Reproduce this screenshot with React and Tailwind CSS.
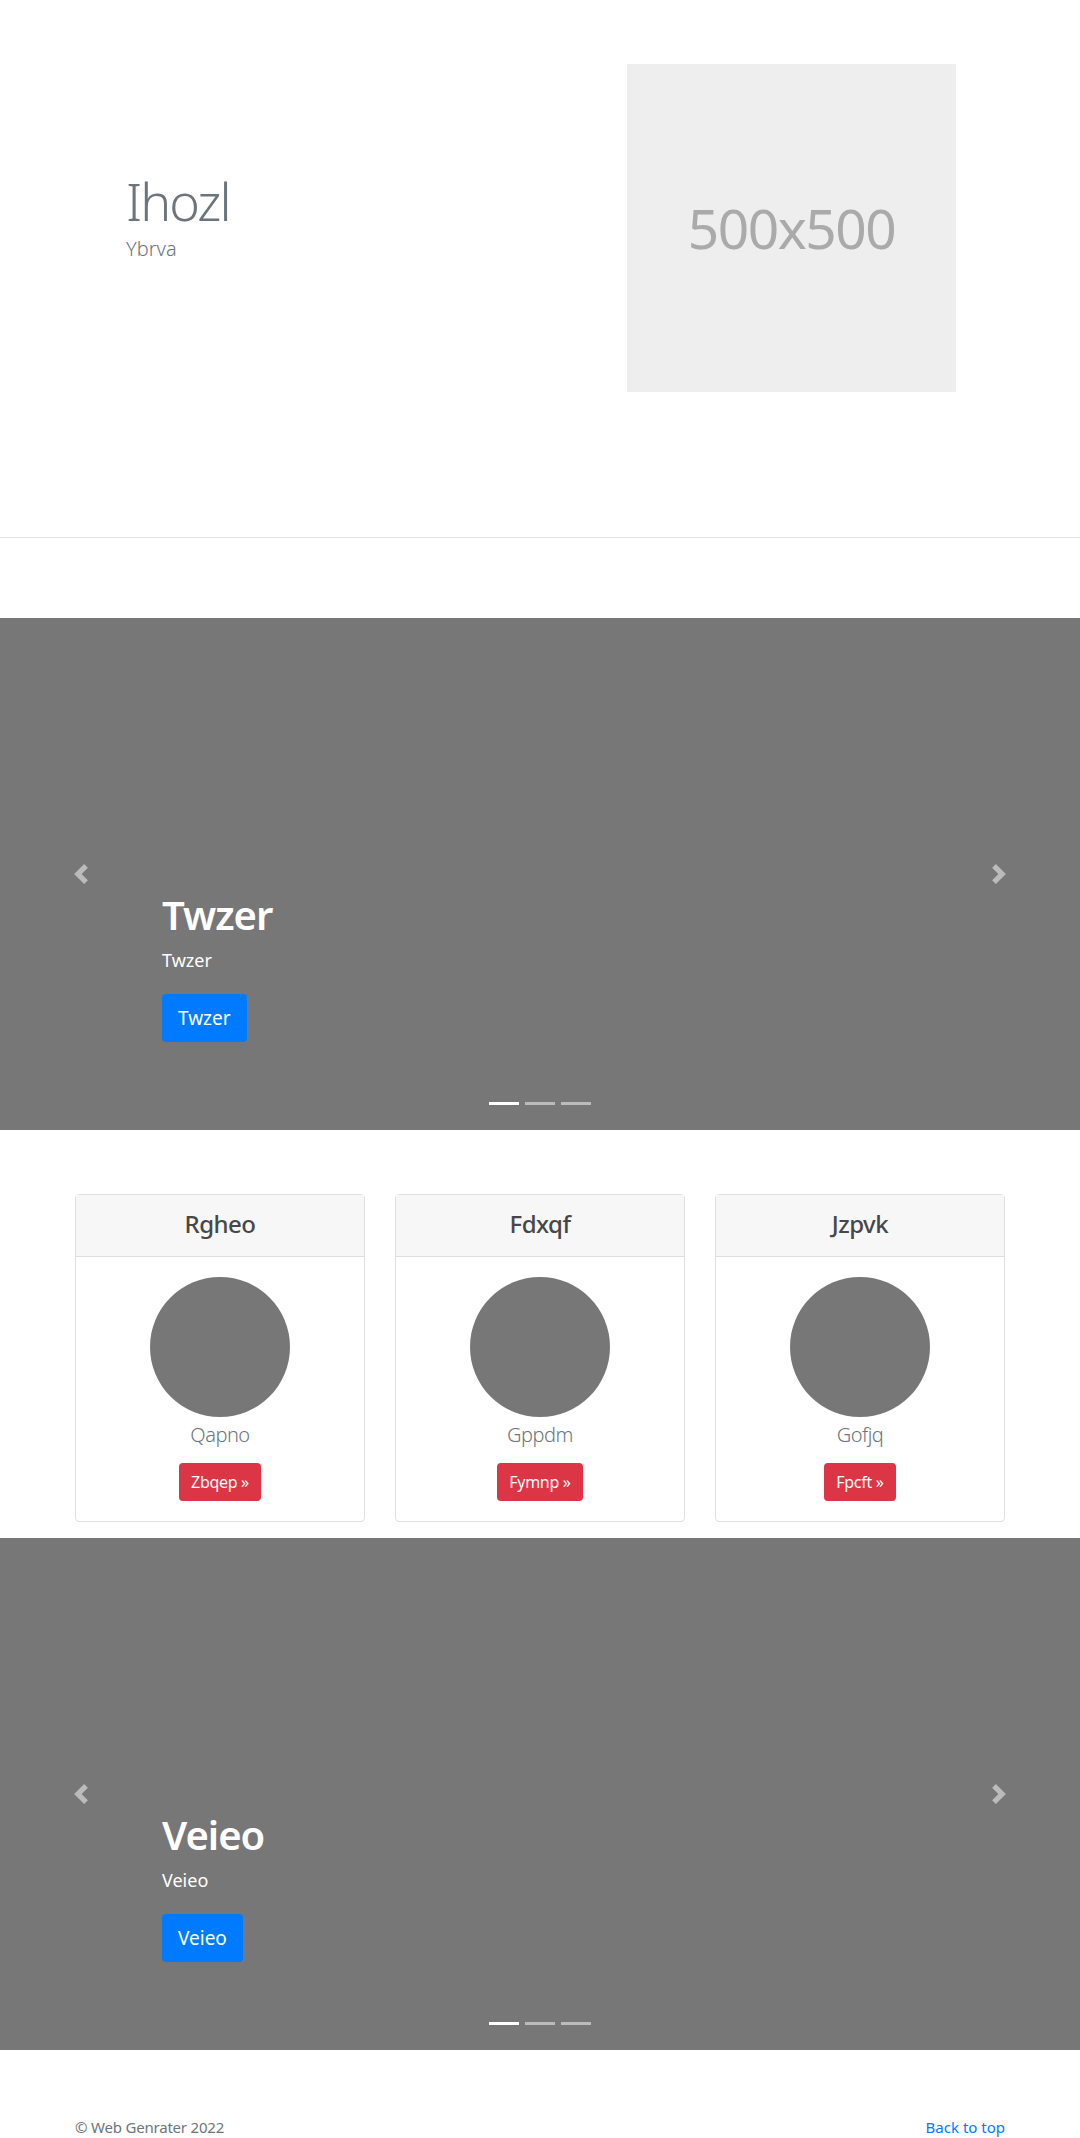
import React from 'react';

const PrevIcon = () => (
  <svg width="20" height="20" viewBox="0 0 8 8" fill="#fff" className="opacity-50">
    <path d="M5.25 0l-4 4 4 4 1.5-1.5L4.25 4l2.5-2.5L5.25 0z" />
  </svg>
);

const NextIcon = () => (
  <svg width="20" height="20" viewBox="0 0 8 8" fill="#fff" className="opacity-50">
    <path d="M2.75 0l-1.5 1.5L3.75 4l-2.5 2.5L2.75 8l4-4-4-4z" />
  </svg>
);

const Slider = ({ title }) => (
  <div className="relative h-[512px] bg-[#777777] overflow-hidden">
    <div className="pl-[162px] pt-[273px]">
      <h2 className="mb-[8px] text-[40px] leading-[48px] font-semibold tracking-[-1px] text-white">{title}</h2>
      <p className="mb-[20px] text-[18px] leading-[27px] text-white">{title}</p>
      <button className="h-[48px] rounded-[4px] bg-[#007bff] px-4 text-[19px] leading-[30px] text-white">
        {title}
      </button>
    </div>

    {/* controls */}
    <div className="absolute left-0 top-0 bottom-0 w-[15%] flex items-center justify-center">
      <PrevIcon />
    </div>
    <div className="absolute right-0 top-0 bottom-0 w-[15%] flex items-center justify-center">
      <NextIcon />
    </div>

    {/* indicators */}
    <div className="absolute left-0 right-0 top-[484px] flex justify-center gap-[6px]">
      <span className="block h-[3px] w-[30px] bg-white" />
      <span className="block h-[3px] w-[30px] bg-white opacity-50" />
      <span className="block h-[3px] w-[30px] bg-white opacity-50" />
    </div>
  </div>
);

const cards = [
  { title: 'Rgheo', name: 'Qapno', btn: 'Zbqep' },
  { title: 'Fdxqf', name: 'Gppdm', btn: 'Fymnp' },
  { title: 'Jzpvk', name: 'Gofjq', btn: 'Fpcft' },
];

const App = () => {
  return (
    <div className="font-['Noto_Sans','Open_Sans',sans-serif] bg-white text-[#212529]">
      {/* hero */}
      <div className="h-[538px] border-b border-[#e5e5e5]">
        <div className="mx-auto flex w-[960px] items-start justify-between px-[15px]">
          <div className="pl-[51px] pt-[170px]">
            <h1 className="text-[52px] leading-[1.2] font-light tracking-[-2px] text-[#6c757d]">Ihozl</h1>
            <p className="mt-[2px] text-[20px] leading-[30px] font-light text-[#6c757d]">Ybrva</p>
          </div>
          <div className="mr-[49px] mt-[64px] flex h-[328px] w-[329px] items-center justify-center bg-[#eeeeee]">
            <span className="text-[55px] tracking-[-1.5px] text-[#aaaaaa]">500x500</span>
          </div>
        </div>
      </div>

      <div className="h-[80px]" />

      <Slider title="Twzer" />

      {/* cards */}
      <div className="mx-auto w-[960px] px-[15px] pt-[64px] pb-[16px]">
        <div className="grid grid-cols-3 gap-[30px]">
          {cards.map((c) => (
            <div key={c.title} className="rounded-[4px] border border-[#dfdfdf] text-center">
              <div className="flex h-[62px] items-center justify-center border-b border-[#dfdfdf] bg-[#f7f7f7] pb-[3px]">
                <h4 className="text-[24px] font-medium tracking-[-0.5px] text-[#474747]">{c.title}</h4>
              </div>
              <div className="flex flex-col items-center px-5 pt-5 pb-5">
                <div className="h-[140px] w-[140px] rounded-full bg-[#777777]" />
                <p className="mt-[3px] mb-[13px] text-[20px] leading-[30px] font-light tracking-[-0.5px] text-[#6c757d]">{c.name}</p>
                <button className="h-[38px] rounded-[4px] bg-[#dc3545] px-3 text-[16px] tracking-[-0.3px] text-white">
                  {c.btn} »
                </button>
              </div>
            </div>
          ))}
        </div>
      </div>

      <Slider title="Veieo" />

      {/* footer */}
      <footer className="mx-auto flex w-[960px] items-baseline justify-between px-[15px] pt-[65px] pb-[24px] leading-[24px]">
        <p className="text-[15px] tracking-[-0.2px] text-[#6c757d]">© Web Genrater 2022</p>
        <a href="#" className="text-[15px] text-[#007bff]">Back to top</a>
      </footer>
    </div>
  );
};

export default App;
